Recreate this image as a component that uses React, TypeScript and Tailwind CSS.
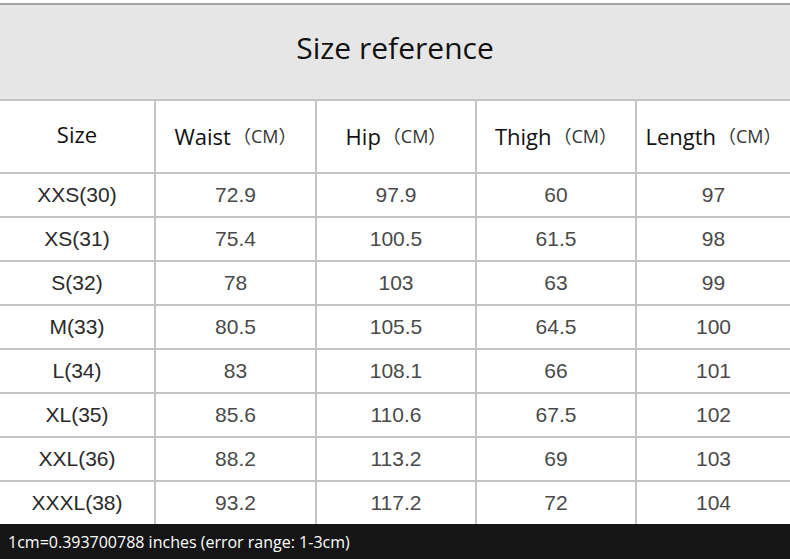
import React from 'react';

const rows = [
  ['XXS(30)', '72.9', '97.9', '60', '97'],
  ['XS(31)', '75.4', '100.5', '61.5', '98'],
  ['S(32)', '78', '103', '63', '99'],
  ['M(33)', '80.5', '105.5', '64.5', '100'],
  ['L(34)', '83', '108.1', '66', '101'],
  ['XL(35)', '85.6', '110.6', '67.5', '102'],
  ['XXL(36)', '88.2', '113.2', '69', '103'],
  ['XXXL(38)', '93.2', '117.2', '72', '104'],
];

const heads = ['Waist', 'Hip', 'Thigh', 'Length'];

const cols = 'grid grid-cols-[156px_161px_160px_160px_1fr]';

const App: React.FC = () => {
  return (
    <div className="w-[790px] h-[559px] bg-white flex flex-col overflow-hidden">
      <div className="h-[3px] bg-white" />
      <div className="h-[2px] bg-[#a4a4a4]" />
      <div className="h-[94px] bg-[#e6e6e6] flex items-center justify-center border-b-2 border-[#c4c4c4] box-content">
        <span className="text-[30px] text-[#111] font-['Open_Sans',sans-serif] pb-[10px]">Size reference</span>
      </div>
      <div className={`${cols} h-[73px] border-b-2 border-[#c4c4c4] font-['Open_Sans',sans-serif] text-[#111]`}>
        <div className="flex items-center justify-center border-r-2 border-[#c4c4c4] text-[22px] pb-1">Size</div>
        {heads.map((h, i) => (
          <div
            key={h}
            className={`flex items-center justify-center whitespace-nowrap ${i < 3 ? 'border-r-2 border-[#c4c4c4]' : ''}`}
          >
            <span className="text-[22px]">{h}</span>
            <span className="text-[18px] text-[#333] font-['Open_Sans','Noto_Sans_CJK_SC',sans-serif] ml-[2px]">（CM）</span>
          </div>
        ))}
      </div>
      {rows.map((r, ri) => (
        <div
          key={r[0]}
          className={`${cols} ${ri < rows.length - 1 ? 'h-[44px] border-b-2 border-[#c4c4c4]' : 'h-[42px]'} font-['Liberation_Sans',Arial,sans-serif] text-[21px]`}
        >
          {r.map((c, ci) => (
            <div
              key={ci}
              className={`flex items-center justify-center ${ci < 4 ? 'border-r-2 border-[#c4c4c4]' : ''} ${ci === 0 ? 'text-[#2a2a2a]' : 'text-[#4a4a4a]'}`}
            >
              {c}
            </div>
          ))}
        </div>
      ))}
      <div className="flex-1 bg-[#151515] flex items-center px-2">
        <span className="text-white text-[16px] font-['Open_Sans',sans-serif]">
          1cm=0.393700788 inches (error range: 1-3cm)
        </span>
      </div>
    </div>
  );
};

export default App;
